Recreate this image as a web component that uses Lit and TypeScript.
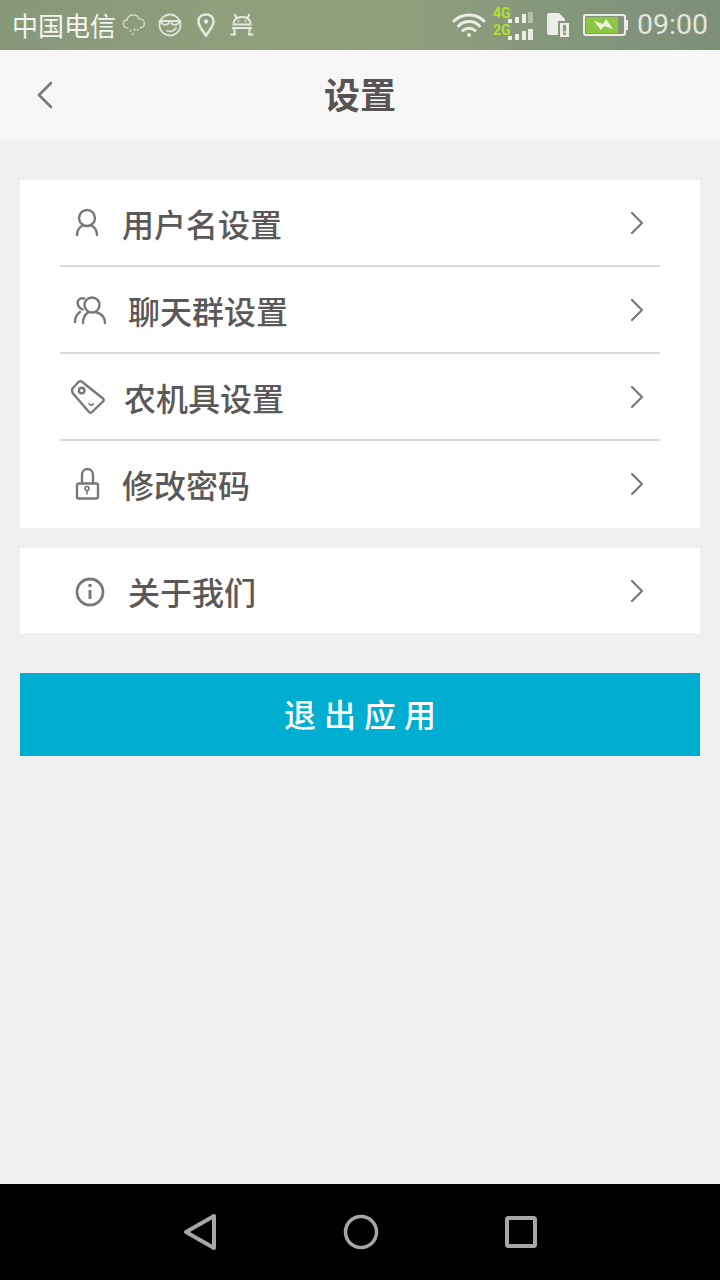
import { LitElement, html, css, svg } from "lit";
import { customElement } from "lit/decorators.js";

const chevron = html`<svg class="chev" width="14" height="24" viewBox="0 0 14 24" fill="none" stroke="#77787a" stroke-width="2.2" stroke-linecap="round" stroke-linejoin="round"><path d="M2 2 L12 12 L2 22"/></svg>`;

const icons: Record<string, unknown> = {
  user: svg`<circle cx="17" cy="14" r="8"/><path d="M7 31 C7 27 9 23.500 12.500 21.500 M27 31 C27 27 25 23.500 21.500 21.500"/>`,
  group: svg`<circle cx="20" cy="14" r="7.500"/><path d="M11 32 C11 27 13 23.500 16 21.500 M33 32 C33 27 30 23 25 21.500 M12 7.500 C7 6 4 11 6.500 15 C7.500 17 9 18 10.500 18.500 M3 31 C3 26 5 23 8 21"/>`,
  tag: svg`<path d="M2.500 10.500 L8.500 4 C9.500 3 10.500 3 11.500 3.500 L33 20.500 C34 21.500 34 22.500 33 23.500 L22 34 C21 35 20 35 19 34 L3 15.500 C2 14 2 12 2.500 10.500 Z"/><circle cx="11.700" cy="12.500" r="2.800"/><path d="M19 25.500 L21 27.500 L23.500 26" stroke-width="1.500"/>`,
  lock: svg`<rect x="7" y="18.500" width="21" height="15" rx="2"/><path d="M12 18 V10 C12 2 23 2 23 10 V18"/><circle cx="17" cy="23.500" r="2" stroke-width="1.600"/><path d="M17 25.500 V29" stroke-width="1.600"/>`,
  info: svg`<circle cx="16" cy="20" r="13" stroke-width="2.800"/><circle cx="16" cy="13.500" r="1.800" fill="#77787a" stroke="none"/><path d="M16 18 V27" stroke-width="3" stroke-linecap="butt"/>`,
};

const rows1 = [
  { icon: "user", text: "用户名设置", cls: "a" },
  { icon: "group", text: "聊天群设置", cls: "b" },
  { icon: "tag", text: "农机具设置", cls: "c" },
  { icon: "lock", text: "修改密码", cls: "a" },
];

@customElement("app-root")
export class AppRoot extends LitElement {
  static styles = css`
    :host { display: flex; flex-direction: column; width: 720px; height: 1280px; background: #f0f0f0;
      font-family: "Noto Sans CJK SC", "Noto Sans", sans-serif; overflow: hidden; }
    .status { height: 50px; flex: none; display: flex; align-items: center; padding: 0 12px; color: #eef0e8;
      background: linear-gradient(90deg, #87977a 0%, #8f9e7b 30%, #90a07d 55%, #83957b 80%, #7d8f78 100%); }
    .carrier { font-size: 26px; line-height: 50px; color: #f4f5f0; }
    .status svg { flex: none; display: block; }
    .sl { display: flex; align-items: center; }
    .cloud { margin-left: 6px; }
    .glasses { margin-left: 12px; }
    .pin { margin-left: 15px; }
    .droid { margin-left: 15px; }
    .sr { margin-left: auto; display: flex; align-items: center; }
    .signal { margin-left: 7px; }
    .sim { margin-left: 14px; }
    .batt { margin-left: 14px; }
    .time { font-family: Roboto, sans-serif; font-size: 28.5px; line-height: 50px; color: #e3e6de; margin-left: 9px; }
    .head { height: 90px; flex: none; background: #f7f7f7; display: flex; align-items: center; justify-content: center; position: relative; }
    .head h1 { margin: 0; font-size: 36px; line-height: 86px; height: 90px; font-weight: 700; color: #595454; }
    .back { position: absolute; left: 37px; top: 31px; display: block; }
    .main { flex: 1; display: flex; flex-direction: column; padding: 40px 20px 0; }
    .card { background: #fff; padding: 0 40px; }
    .card.second { margin-top: 20px; }
    .row { height: 85px; display: flex; align-items: center; padding-right: 16px; }
    .row + .row { border-top: 2px solid #d9d9d9; }
    .card.first .row:last-child { padding-bottom: 2px; }
    .ico { display: block; flex: none; fill: none; stroke: #77787a; stroke-width: 2.4; stroke-linecap: round; stroke-linejoin: round; }
    .label { font-size: 32px; line-height: 44px; color: #5c5858; flex: 1; font-weight: 500; }
    .a .ico { margin: -1px 16px 0 10px; }
    .b .ico { margin: -1px 20px 0 12px; }
    .c .ico { margin: -1px 18px 0 10px; }
    .i .ico { margin: -1px 18px 0 14px; }
    .exit { margin-top: 40px; height: 83px; background: #00aed2; color: #fff; border: 0; padding: 0 0 3px 8px; font: inherit;
      font-size: 32px; font-weight: 500; letter-spacing: 8px; display: block; width: 100%; }
    .nav { height: 96px; flex: none; background: #000; display: flex; align-items: center; justify-content: center; }
    .nav svg { display: block; margin-left: 10px; }
  `;

  render() {
    return html`
      <div class="status">
        <div class="sl">
          <span class="carrier">中国电信</span>
          <svg class="cloud" width="24" height="24" viewBox="0 0 24 24" fill="none" stroke="#d5dacb" stroke-width="1.300" stroke-linecap="round"><path d="M6 15 C0 15 0 7 5 7 C6 1 15 0 17 6 C23 5 25 14 18 15"/><path d="M9 17 L8 19 M13 16 L12 18 M16 16 L15 18 M11 20 L10.500 21.500" stroke-dasharray="1.500 1"/></svg>
          <svg class="glasses" width="24" height="24" viewBox="0 0 24 24" fill="none" stroke="#dfe3d8" stroke-width="1.800" stroke-linecap="round"><circle cx="12" cy="12" r="10.500"/><path d="M1.500 8 H22.500 M3 8 C4 13 10 13 11 9 M13 9 C14 13 20 13 21 8 M9 18 C12 19 16 18 18 15"/></svg>
          <svg class="pin" width="18" height="24" viewBox="0 0 18 24" fill="none" stroke="#e6e9e1" stroke-width="2.600"><path d="M9 22.500 C4.500 16 1.500 13 1.500 8.500 C1.500 4 5 1.500 9 1.500 C13 1.500 16.500 4 16.500 8.500 C16.500 13 13.500 16 9 22.500 Z"/><circle cx="9" cy="8.500" r="1.800" fill="#e6e9e1" stroke-width="1"/></svg>
          <svg class="droid" width="24" height="24" viewBox="0 0 24 24" fill="none" stroke="#e6e9e1" stroke-width="2"><path d="M3.500 11.500 C3.500 6 7 4 12 4 C17 4 20.500 6 20.500 11.500 Z M6.500 5 L4.500 1 M17.500 5 L19.500 1 M2 15 H22 M4.500 15 V21.500 M19.500 15 V21.500 M0.500 21.500 H6 M18 21.500 H23.500"/><circle cx="8.500" cy="8" r="1" fill="#e6e9e1" stroke="none"/><circle cx="15.500" cy="8" r="1" fill="#e6e9e1" stroke="none"/></svg>
        </div>
        <div class="sr">
          <svg width="34" height="26" viewBox="0 0 34 26" fill="none" stroke="#eceee6" stroke-width="3" stroke-linecap="round"><path d="M2 9 C10 1 24 1 32 9 M6.500 14 C12 8 22 8 27.500 14 M11 18.500 C14 15.500 20 15.500 23 18.500"/><circle cx="17" cy="23" r="2" fill="#eceee6" stroke="none"/></svg>
          <svg class="signal" width="40" height="38" viewBox="0 0 40 38">
            <g fill="#aee02c" font-family="Roboto, sans-serif" font-weight="700" font-size="14"><text x="0" y="12">4G</text><text x="0" y="29">2G</text></g>
            <g fill="#eceee6"><rect x="15" y="13" width="4" height="4"/><rect x="22" y="11" width="4" height="6"/><rect x="29" y="8" width="4" height="9"/><rect x="35" y="6" width="5" height="11" opacity=".45"/>
            <rect x="15" y="30" width="4" height="4"/><rect x="22" y="28" width="4" height="6"/><rect x="29" y="25" width="4" height="9"/><rect x="35" y="23" width="5" height="11"/></g>
          </svg>
          <svg class="sim" width="22" height="26" viewBox="0 0 22 26"><path d="M0 3 C0 1.500 1 1 3 1 H12 L18 7 V9 H11 V23 H2 C1 23 0 22 0 21 Z" fill="#eceee6"/><path d="M13 11 H22 V25 H13 Z" fill="#eceee6"/><path d="M16 13 H19 V19.500 H16 Z M16 20.500 H19 V23 H16 Z" fill="#8a9a7a"/></svg>
          <svg class="batt" width="45" height="24" viewBox="0 0 45 24"><rect x="1" y="2" width="41" height="20" rx="2" fill="none" stroke="#eceee6" stroke-width="2"/><rect x="3" y="4" width="32" height="16" fill="#8fc544"/><rect x="42" y="7" width="3" height="10" fill="#eceee6"/><path d="M11 8 L20 11 L23 6 L30 16 L21 13 L18 17 Z" fill="#eef5df"/></svg>
          <span class="time">09:00</span>
        </div>
      </div>
      <div class="head">
        <svg class="back" width="16" height="28" viewBox="0 0 16 28" fill="none" stroke="#77787a" stroke-width="2.600" stroke-linecap="round" stroke-linejoin="round"><path d="M14 2 L2 14 L14 26"/></svg>
        <h1>设置</h1>
      </div>
      <div class="main">
        <div class="card first">
          ${rows1.map(r => html`<div class="row ${r.cls}"><svg class="ico" width="36" height="36" viewBox="0 0 36 36">${icons[r.icon]}</svg><span class="label">${r.text}</span>${chevron}</div>`)}
        </div>
        <div class="card second">
          <div class="row i"><svg class="ico" width="36" height="36" viewBox="0 0 36 36">${icons.info}</svg><span class="label">关于我们</span>${chevron}</div>
        </div>
        <button class="exit">退出应用</button>
      </div>
      <div class="nav">
        <svg width="368" height="44" viewBox="0 0 368 44" fill="none" stroke="#a6a6a6" stroke-width="4" stroke-linejoin="round"><path d="M33 6 V38 L5 22 Z"/><circle cx="180" cy="22" r="15.500" stroke-width="3.500"/><rect x="326" y="8" width="28" height="28" rx="1.500"/></svg>
      </div>
    `;
  }
}
